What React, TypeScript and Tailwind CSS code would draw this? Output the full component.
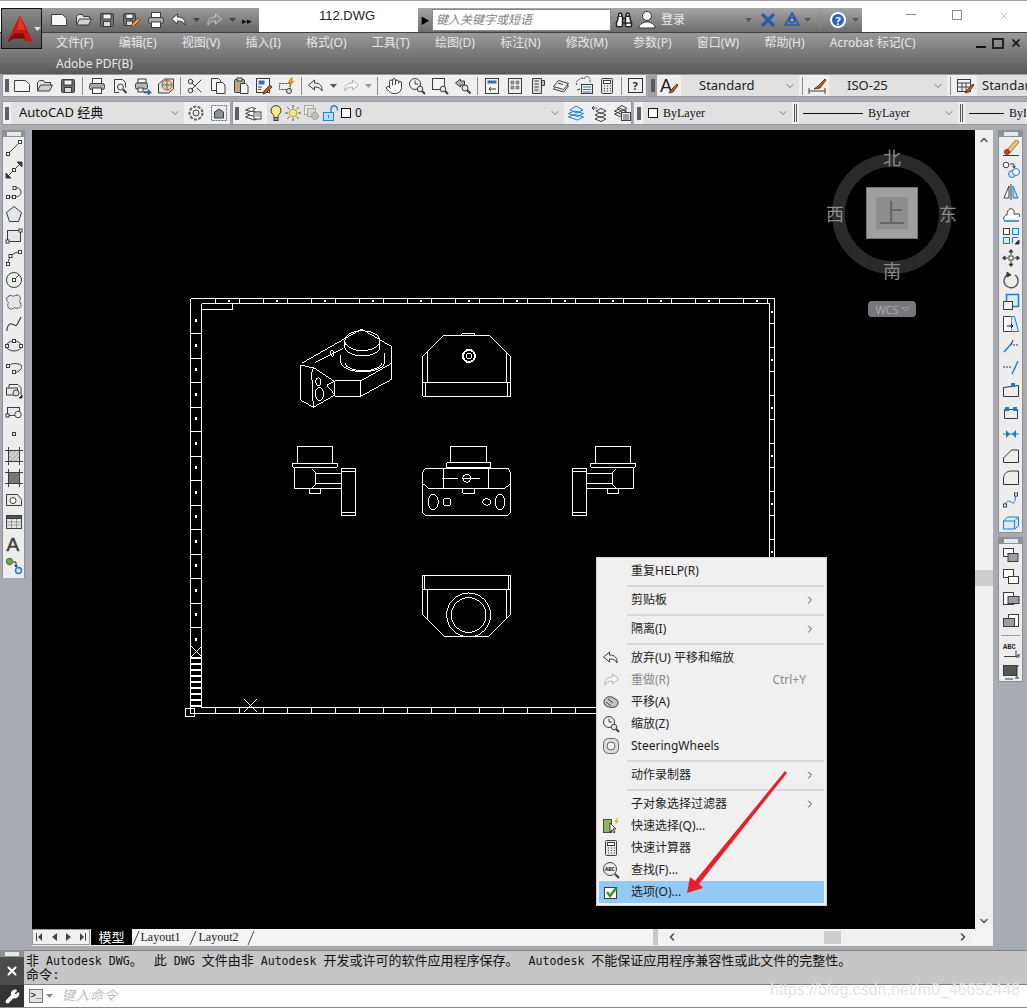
import type { ReactNode } from "react";
import { Binoculars, ChevronDown, ChevronLeft, ChevronRight, ChevronUp, Hand, Scissors, Wrench, X } from "lucide-react";

const BLUE = "#1b7bd0";

function Ico({ children, size = 18 }: { children: ReactNode; size?: number }) {
  return (
    <svg className="overflow-visible" width={size} height={size} viewBox="0 0 18 18" fill="none" stroke="#3c3c3c" strokeWidth="1">
      {children}
    </svg>
  );
}

const icons: Record<string, ReactNode> = {
  newFile: <path d="M1.5 3.5h11l4 4v7h-15z" fill="#f6f6f6" />,
  open: (
    <>
      <path d="M1.5 14V5.5l2-2h4l1 2h6v2.5" fill="#e2e2e2" />
      <path d="M1.5 14l3-6h12l-3 6z" fill="#cfcfcf" />
    </>
  ),
  save: (
    <>
      <rect x="2.5" y="2.5" width="13" height="13" rx="1" fill="#6a6f78" />
      <rect x="5" y="3" width="8" height="5" fill="#f2f2f2" />
      <rect x="5.5" y="10.5" width="7" height="5" fill="#dcdcdc" />
    </>
  ),
  saveAs: (
    <>
      <rect x="1.5" y="2.5" width="12" height="12" rx="1" fill="#6a6f78" />
      <rect x="4" y="3" width="7" height="4.5" fill="#f2f2f2" />
      <rect x="4.5" y="10" width="6" height="4.5" fill="#dcdcdc" />
      <path d="M9 16l1-3 6-6 2 2-6 6z" fill="#e8a33c" stroke="#7a4a10" />
    </>
  ),
  print: (
    <>
      <rect x="4.5" y="1.5" width="9" height="5" fill="#fff" />
      <rect x="1.5" y="6.5" width="15" height="6" rx="2" fill="#a9adb3" />
      <rect x="4.5" y="11" width="9" height="5.5" fill="#fff" />
    </>
  ),
  undo: <path d="M7.5 3L1.5 8l6 5v-3c4 0 6 1 7.5 4 .5-5-2-8-7.5-8z" fill="#eee" />,
  redo: <path d="M10.5 3l6 5-6 5v-3c-4 0-6 1-7.5 4-.5-5 2-8 7.5-8z" fill="#f7f7f7" stroke="#aeb0b3" />,
  redoDim: <path d="M10.5 3l6 5-6 5v-3c-4 0-6 1-7.5 4-.5-5 2-8 7.5-8z" fill="#8a8a8a" stroke="#c8c8c8" />,
  preview: (
    <>
      <path d="M3.5 2.5h8l3 3v5M8 15.5H3.5v-13" fill="#f8f8f8" />
      <circle cx="9.5" cy="10" r="3" fill="#e6eef5" />
      <path d="M12 12.5l3.5 3.5" strokeWidth="2" />
    </>
  ),
  publish: (
    <>
      <rect x="4" y="2" width="8" height="4" fill="#fff" />
      <rect x="1.5" y="6" width="12" height="6" rx="1.5" fill="#b5b8bd" />
      <rect x="4" y="11" width="5" height="4" fill="#fff" />
      <path d="M10 14.5h4v-2l3.5 3-3.5 2.5v-2h-4z" fill={BLUE} stroke="#0b4f91" strokeWidth="0.5" />
    </>
  ),
  dwf: (
    <>
      <path d="M1.5 7l6-5 9 0v10l-5 4h-10z" fill="#dfe3e6" />
      <circle cx="10" cy="8" r="5" fill="#f2d27a" stroke="#d4472d" />
      <path d="M10 3v10M5 8h10" stroke={BLUE} />
    </>
  ),
  copy: (
    <>
      <path d="M2.5 1.5h7l2 2v10h-9z" fill="#f4f4f4" />
      <path d="M7.5 5.5h6l2.5 2.5v8.5h-8.5z" fill="#f4f4f4" />
    </>
  ),
  paste: (
    <>
      <rect x="2.5" y="2.5" width="10" height="13" rx="1" fill="#b9a88a" />
      <rect x="5" y="1" width="5" height="3" fill="#d9d9d9" />
      <path d="M8.5 6.5h5l2.5 2.5v7.5h-7.5z" fill="#f4f4f4" />
    </>
  ),
  match: (
    <>
      <rect x="1.5" y="1.5" width="13" height="14" fill="#f4f4f4" />
      <rect x="3.5" y="3.5" width="6" height="4" fill="#2f6fb5" stroke="none" />
      <path d="M3 10h4M3 12.5h3" />
      <path d="M9 14l6-6 2 2-6 6-3 1z" fill="#b5651d" stroke="#6d3a0d" />
    </>
  ),
  blockEdit: (
    <>
      <path d="M1.5 6.5h11v6h-11z" fill="#eee" strokeDasharray="2 1" />
      <circle cx="11" cy="14" r="2.5" fill="#ddd" />
      <path d="M13 1l-3 5h3l-2 4 5-6h-3l2-3z" fill="#f0a01e" stroke="#b96c00" strokeWidth="0.5" />
    </>
  ),
  zoomRt: (
    <>
      <circle cx="7" cy="7" r="5.5" fill="#f2f2f2" />
      <path d="M7 3.5V7h3" />
      <circle cx="12" cy="12" r="2.8" fill="#dfe7ef" />
      <path d="M14 14l3 3" strokeWidth="2" />
    </>
  ),
  zoomWin: (
    <>
      <rect x="1.5" y="1.5" width="12" height="11" fill="#f4f4f4" />
      <circle cx="12" cy="12" r="2.8" fill="#dfe7ef" />
      <path d="M14 14l3 3" strokeWidth="2" />
    </>
  ),
  zoomPrev: (
    <>
      <path d="M6.5 2L1.5 6l5 4V8h4V4h-4z" fill="#aeb1b6" />
      <circle cx="11" cy="11" r="3" fill="#dfe7ef" />
      <path d="M13 13l3.5 3.5" strokeWidth="2" />
    </>
  ),
  props: (
    <>
      <rect x="2.5" y="1.5" width="13" height="15" fill="#f2f2f2" />
      <rect x="4.5" y="3.5" width="9" height="3" fill="#2f6fb5" stroke="none" />
      <path d="M13 12H6m2-2l-2 2 2 2" />
    </>
  ),
  grid: (
    <>
      <rect x="2.5" y="1.5" width="13" height="15" fill="#eee" />
      <path d="M5 4h3v3H5zm5 0h3v3h-3zM5 9h3v3H5zm5 0h3v3h-3z" fill="#9a9a9a" stroke="#555" strokeWidth="0.5" />
    </>
  ),
  palette: (
    <>
      <path d="M3.5 1.5h9v15h-9z" fill="#dcdcdc" />
      <path d="M12.5 3.5h3v5h-3z" fill="#bbb" />
      <path d="M5.5 4h4M5.5 7h4M5.5 10h4M5.5 13h4" strokeWidth="1.6" stroke="#777" />
    </>
  ),
  sheet: (
    <>
      <path d="M1.5 12l5-6 10 3-5 6z" fill="#ececec" />
      <path d="M1.5 9.5l5-6 10 3-5 6z" fill="#f6f6f6" />
      <path d="M6 6l5 1.5" />
    </>
  ),
  markup: (
    <>
      <path d="M2 8a3 3 0 0 1 2-5 3 3 0 0 1 5-1 3 3 0 0 1 6 1v3" strokeDasharray="2 1" />
      <rect x="6.5" y="7.5" width="11" height="9" fill="#eee" />
      <path d="M8 10h8M8 12.5h8M8 15h8" stroke="#1d86c6" />
      <path d="M2 13l3-1" />
    </>
  ),
  calc: (
    <>
      <rect x="3.5" y="1.5" width="11" height="15" rx="1" fill="#e6e6e6" />
      <rect x="5.5" y="3.5" width="7" height="3" fill="#fff" />
      <path d="M6 9h1m2 0h1m2 0h1M6 11.5h1m2 0h1m2 0h1M6 14h1m2 0h1m2 0h1" strokeWidth="1.2" />
    </>
  ),
  gear: (
    <>
      <circle cx="9" cy="9" r="6.5" strokeDasharray="3 1.5" strokeWidth="2" stroke="#666" />
      <circle cx="9" cy="9" r="3" />
    </>
  ),
  workspace: (
    <>
      <rect x="1.5" y="1.5" width="15" height="15" strokeDasharray="2 1" stroke="#5a6d7c" />
      <path d="M4.5 14V8l4.5-3 4.5 3v6z" fill="#8c8f94" />
    </>
  ),
  layers: (
    <>
      <path d="M1.5 13l6-2.5 9 2.5-6 3z" fill="#fff" />
      <path d="M1.5 9.5l6-2.5 9 2.5-6 3z" fill="#fff" />
      <path d="M1.5 6l6-2.5 4 1-4 3z" fill="#fff" />
      <rect x="10" y="8" width="7" height="7" fill="#fff" />
      <path d="M11 10h5M11 12h5" stroke="#777" />
    </>
  ),
  bulb: (
    <>
      <path d="M9 1.5a5 5 0 0 1 3 9c-1 1-1 2-1 3H7c0-1 0-2-1-3a5 5 0 0 1 3-9z" fill="#fbe785" />
      <rect x="7" y="13.5" width="4" height="3" fill="#8fa2b5" />
    </>
  ),
  sun: (
    <>
      <circle cx="9" cy="9" r="3.8" fill="#fbe785" stroke="#b79b3c" />
      <path d="M9 1v3M9 14v3M1 9h3M14 9h3M3.3 3.3l2 2M12.7 12.7l2 2M14.7 3.3l-2 2M5.3 12.7l-2 2" stroke="#555" />
    </>
  ),
  freeze: (
    <>
      <rect x="1.5" y="1.5" width="9" height="9" fill="#e7e7e7" stroke="#aaa" />
      <rect x="4.5" y="4.5" width="8" height="8" fill="#d4d4d4" stroke="#aaa" />
      <circle cx="12" cy="12" r="3.6" fill="#bbb" stroke="#999" strokeDasharray="2 1" />
    </>
  ),
  lock: (
    <>
      <path d="M9 8V5a3.2 3.2 0 0 1 6.4 0v1.5" stroke="#2e7fbf" strokeWidth="1.4" />
      <rect x="1.5" y="8.5" width="10" height="8" fill="#bcdcf2" stroke="#2e7fbf" />
      <path d="M6.5 11v3" stroke="#2e7fbf" />
    </>
  ),
  layerPrev: <path d="M1.5 13l6-2.5 9 2.5-6 3zM1.5 9.5l6-2.5 9 2.5-6 3zM3 6l6-4 7 4-6 3z" fill="#e3f1fb" stroke={BLUE} />,
  layerIso: (
    <>
      <path d="M2 4h5M4 2l-2 2 2 2" />
      <path d="M5 15l5-2.5 6 2.5-5 2.5zM5 11l5-2.5 6 2.5-5 2.5zM6 7l5-2.5 5 2.5-5 2.5z" fill="#f2f2f2" />
    </>
  ),
  layerStates: (
    <>
      <path d="M1.5 10l6-2.5 5 2-6 3zM1.5 7l6-2.5 6 2.5-6 3zM4 4.5l5-3 5 3-6 2.5z" fill="#f2f2f2" />
      <rect x="8.5" y="8.5" width="9" height="8" fill="#eee" />
      <path d="M10 11h6M10 13h6M10 15h6" stroke="#555" />
    </>
  ),
  textStyle: (
    <>
      <text x="0" y="15" fontSize="18" fontFamily="Liberation Sans" fill="#222" stroke="none">A</text>
      <path d="M9 16l2-3 6-6 1 1-5 7z" fill="#b5651d" stroke="#6d3a0d" />
    </>
  ),
  dimStyle: (
    <>
      <path d="M1 11v6M17 11v6M1 14h16" />
      <path d="M6 12l4-3 7-7 1 1-6 8z" fill="#b5651d" stroke="#6d3a0d" />
    </>
  ),
  tableStyle: (
    <>
      <rect x="1.5" y="2.5" width="13" height="12" fill="#f5f5f5" />
      <path d="M1.5 6h13M1.5 10h13M6 6v8M10 6v8" />
      <path d="M9 16l2-3 6-6 1 1-5 7z" fill="#b5651d" stroke="#6d3a0d" />
    </>
  ),
};

const leftTools: ReactNode[] = [
  <><path d="M3 15L15 3" /><rect x="1.5" y="13.5" width="3" height="3" fill="#fff" /><rect x="13.5" y="1.5" width="3" height="3" fill="#fff" /></>,
  <><path d="M2 16L16 2" /><path d="M1 17v-5l5 5zM17 1v5l-5-5z" fill="#333" /><rect x="7.5" y="7.5" width="3" height="3" fill="#fff" /></>,
  <><path d="M3 14h6c5 0 7-2 7-5s-3-5-6-4" /><rect x="1.5" y="12.5" width="3" height="3" fill="#fff" /><rect x="7.5" y="12.5" width="3" height="3" fill="#fff" /><rect x="8" y="3.5" width="3" height="3" fill="#fff" /></>,
  <path d="M9 1.5l7.5 6-3 9h-9l-3-9z" fill="#e4e6e9" />,
  <><rect x="2.5" y="3.5" width="13" height="11" fill="#e4e6e9" /><rect x="1" y="13" width="3" height="3" fill="#fff" /><rect x="14" y="2" width="3" height="3" fill="#fff" /></>,
  <><path d="M3 15c0-7 5-12 12-12" /><rect x="1.5" y="13.5" width="3" height="3" fill="#fff" /><rect x="13.5" y="1.5" width="3" height="3" fill="#fff" /><rect x="4" y="5.5" width="3" height="3" fill="#fff" /></>,
  <><circle cx="9" cy="9" r="7.5" fill="#eceeef" /><path d="M9 9l5-5" /><rect x="7.5" y="7.5" width="3" height="3" fill="#fff" /></>,
  <path d="M4 3c3-2 3 1 5 0s5-2 6 1-1 3 0 5 2 5-1 6-4-1-5 0-5 2-6-1 1-4 0-5-3-4 1-6z" fill="#e4e6e9" strokeDasharray="2 0.5" />,
  <path d="M2 16c0-5 2-8 5-7s4 3 6-1 3-6 3-6" strokeWidth="1.2" />,
  <><ellipse cx="9" cy="9" rx="7.5" ry="5" fill="#e4e6e9" /><rect x="7.5" y="2.5" width="3" height="3" fill="#fff" /><rect x="0.5" y="7.5" width="3" height="3" fill="#fff" /><rect x="14.5" y="7.5" width="3" height="3" fill="#fff" /></>,
  <><path d="M3 7c2-3 10-3 13-1 2 3-2 8-7 7" /><rect x="1.5" y="5.5" width="3" height="3" fill="#fff" /><rect x="7.5" y="11.5" width="3" height="3" fill="#fff" /></>,
  <><path d="M4 12V3.5h9l3 3V14" fill="#eee" /><rect x="1.5" y="7" width="11" height="7" fill="#e4e6e9" /><circle cx="11" cy="12" r="3" fill="#ddd" /><path d="M14 17l3-3v3z" fill="#111" /></>,
  <><rect x="2.5" y="4.5" width="12" height="8" fill="#e4e6e9" /><circle cx="13" cy="11.5" r="3.2" fill="#eee" /><rect x="1" y="11" width="3" height="3" fill="#fff" /></>,
  <rect x="7.5" y="7.5" width="3" height="3" />,
  <><rect x="3.5" y="3.5" width="11" height="11" fill="#bbb" /><path d="M4 9l5-5M4 13l9-9M8 14l6-6M12 14l2-2" stroke="#eee" /><path d="M0 3.5h18M0 14.5h18M3.5 0v18M14.5 0v18" /></>,
  <><rect x="3.5" y="3.5" width="11" height="11" fill="#777" /><path d="M0 3.5h18M0 14.5h18M3.5 0v18M14.5 0v18" /></>,
  <><path d="M1.5 3.5h11l4 5v6h-15z" fill="#e8e8e8" /><circle cx="8" cy="9.5" r="3" fill="#fff" /></>,
  <><rect x="1.5" y="2.5" width="15" height="13" fill="#e6e8ea" /><rect x="1.5" y="2.5" width="15" height="3" fill="#555" /><path d="M1.5 9h15M1.5 12h15M6.5 6v9M11.5 6v9" stroke="#999" /></>,
  <text x="1.5" y="16" fontSize="19" fontFamily="Liberation Sans" fill="#3c3c3c" stroke="#3c3c3c" strokeWidth="0.5">A</text>,
  <><circle cx="4.5" cy="4.5" r="3.2" fill="#6aa84f" stroke="#3b6d2a" /><path d="M8 5h3v4M9.5 8l1.5 2 1.5-2" stroke="#222" /><circle cx="13.5" cy="13.5" r="3" fill="#cfe6fa" stroke={BLUE} strokeWidth="1.4" /></>,
];

const rightTop: ReactNode[] = [
  <><path d="M4 12L14 1l3 2-9 11z" fill="#e8c080" stroke="#9a7a40" /><circle cx="5" cy="13" r="2.5" fill="#c9451b" stroke="#8a2d0c" /><path d="M1 16.5h16" /></>,
  <><circle cx="4" cy="4" r="2.8" fill="#fff" /><path d="M8 3h4v3M10.5 5l1.5 2 1.5-2" /><circle cx="10" cy="13" r="3.5" fill="#cfe6fa" stroke={BLUE} /><circle cx="14" cy="11" r="3.5" fill="#fff" stroke={BLUE} /></>,
  <><path d="M9 1v16" /><path d="M7 3L2 15h5z" fill="#fff" /><path d="M11 3l5 12h-5z" fill="#bcdcf2" stroke={BLUE} /></>,
  <><path d="M2 15c-1-3 1-5 3-5 0-4 2-7 5-6s2 4 2 5h4c2 0 2 2 1 3" fill="#fff" /><path d="M2 16h15" stroke={BLUE} strokeWidth="1.5" /></>,
  <><rect x="1.5" y="1.5" width="6" height="6" fill="#fff" /><rect x="10.5" y="1.5" width="6" height="6" fill="#d8ecfa" stroke={BLUE} /><rect x="1.5" y="10.5" width="6" height="6" fill="#d8ecfa" stroke={BLUE} /><path d="M10.5 16.5v-6h6" stroke={BLUE} /><path d="M13 17l4-4v4z" fill="#111" /></>,
  <><rect x="7" y="7" width="4" height="4" fill="#fff" /><path d="M9 6V1M7 3l2-2.5L11 3zM9 12v5M7 15l2 2.5 2-2.5zM6 9H1M3 7L.5 9 3 11zM12 9h5M15 7l2.5 2-2.5 2z" fill="#333" /></>,
  <><path d="M6 3.5A7 7 0 1 0 13 4" strokeWidth="1.4" stroke="#555" /><path d="M5 1l4 3-4 2z" fill="#333" /></>,
  <><rect x="4.5" y="1.5" width="12" height="12" fill="#d8ecfa" stroke={BLUE} strokeWidth="1.5" /><rect x="1.5" y="8.5" width="9" height="8" fill="#f0f0f0" /></>,
  <><path d="M1.5 1.5h8v15h-8z" fill="#fff" /><path d="M9.5 1.5h3l4 15h-7" fill="#d8ecfa" stroke={BLUE} /><path d="M5 11h6M9 9l2 2-2 2" stroke="#111" /></>,
  <><path d="M2 15L10 6" stroke={BLUE} strokeWidth="1.4" /><path d="M9 8l2-5M11 8h2M14 8h2" stroke="#333" /></>,
  <><path d="M1 8h2M4 8h2M7 8h2" stroke="#333" /><path d="M10 15l6-13" stroke={BLUE} strokeWidth="1.4" /></>,
  <><path d="M1.5 15.5v-9l15-2v11" stroke="#333" /><path d="M1.5 15.5h15" /><rect x="9" y="2" width="4" height="4" fill={BLUE} stroke="none" /></>,
  <><path d="M2.5 15.5v-9h13v9z" /><rect x="3" y="4" width="4" height="4" fill={BLUE} stroke="none" /><rect x="11" y="4" width="4" height="4" fill={BLUE} stroke="none" /></>,
  <><path d="M1 9h16" stroke={BLUE} /><path d="M4 5v8l4-4zM14 5v8l-4-4z" fill={BLUE} stroke="none" /></>,
  <path d="M1.5 15.5V11l8-8h7v12.5z" stroke="#333" />,
  <path d="M1.5 15.5V10c0-5 3-8 8-8h7v13.5z" stroke="#333" />,
  <><path d="M3 15c1-5 3-6 6-4s3 3 5-7" stroke={BLUE} /><rect x="1.5" y="13" width="3" height="3" fill="#fff" /><rect x="12.5" y="2" width="3" height="3" fill="#fff" /></>,
  <path d="M1.5 8l4-4h11v9l-4 3h-11zM1.5 8h11v8M12.5 8l4-4" stroke={BLUE} fill="#d8ecfa" />,
];

const rightBottom: ReactNode[] = [
  <><rect x="1.5" y="2.5" width="10" height="8" fill="#fff" /><rect x="6" y="7.5" width="10" height="8" fill="#9a9da2" /></>,
  <><rect x="1.5" y="1.5" width="10" height="8" fill="#fff" /><rect x="6.5" y="8.5" width="10" height="7" fill="#fff" /></>,
  <><rect x="1.5" y="2.5" width="10" height="12" fill="#fff" /><rect x="6" y="6.5" width="11" height="7" fill="#9a9da2" /></>,
  <><rect x="6.5" y="2.5" width="10" height="12" fill="#fff" /><rect x="1.5" y="6.5" width="11" height="8" fill="#9a9da2" /></>,
];

const rightLast: ReactNode[] = [
  <><text x="1" y="8" fontSize="7" fontWeight="700" fontFamily="Liberation Mono" fill="#222" stroke="none">ABC</text><path d="M2 15.5h12v-6M14 16l3-3v3z" /></>,
  <><rect x="1.5" y="2.5" width="13" height="10" fill="#555" /><path d="M3 16h8M15 2v13M13 3h4M13 15h4" /></>,
];

function Grip() {
  return <div className="h-[13px] w-[4px] bg-[radial-gradient(#555_0.7px,transparent_0.8px)] bg-[length:2px_2px]" />;
}

function HGrip() {
  return (
    <div className="flex h-[7px] items-center justify-center bg-[#8e9095]">
      <div className="h-[4px] w-[14px] bg-[radial-gradient(#eee_0.7px,transparent_0.8px)] bg-[length:2px_2px]" />
    </div>
  );
}

function Btn({ name, className = "w-[23px]" }: { name: string; className?: string }) {
  return (
    <div className={`flex h-full shrink-0 items-center justify-center ${className}`}>
      <Ico>{icons[name]}</Ico>
    </div>
  );
}

function Sep() {
  return (
    <div className="flex h-full w-[6px] shrink-0 items-center justify-center">
      <div className="h-[18px] w-px bg-[#8c8c8c]" />
    </div>
  );
}

function Drop({ color = "#555", className = "w-[12px]" }: { color?: string; className?: string }) {
  return (
    <div className={`flex h-full shrink-0 items-center justify-center ${className}`}>
      <svg width="7" height="4" viewBox="0 0 7 4">
        <path d="M0 0h7L3.5 4z" fill={color} />
      </svg>
    </div>
  );
}

function Combo({ className, children }: { className: string; children: ReactNode }) {
  return (
    <div className={`flex h-full shrink-0 items-center justify-between overflow-hidden bg-[#e1e1e1] pr-[3px] ${className}`}>
      {children}
    </div>
  );
}

function Chev() {
  return <ChevronDown className="h-[12px] w-[12px] shrink-0 text-[#555]" strokeWidth={1.5} />;
}

function TitleBar() {
  return (
    <div className="h-[32px] shrink-0 border-t border-[#a0a0a0] bg-white pt-[7px]">
      <div className="flex h-[24px] items-stretch text-[#222]">
        <div className="ml-[42px] flex w-[217px] shrink-0 items-center bg-gradient-to-b from-[#9c9c9c] to-[#676767] pl-[5px]">
          <Btn name="newFile" className="w-[24px]" />
          <Btn name="open" className="w-[25px]" />
          <Btn name="save" className="w-[22px]" />
          <Btn name="saveAs" className="w-[26px]" />
          <Btn name="print" className="w-[23px]" />
          <Btn name="undo" className="w-[23px]" />
          <Drop color="#444" />
          <Btn name="redoDim" className="w-[24px]" />
          <Drop color="#444" />
          <span className="ml-[4px] text-[9px] leading-none text-black">▸▸</span>
        </div>
        <div className="w-[159px] shrink-0 pl-[60px] font-['Liberation_Sans'] text-[13px] leading-[15px] text-[#222]">112.DWG</div>
        <div className="flex w-[444px] shrink-0 items-center bg-gradient-to-b from-[#a6a6a6] to-[#6e6e6e]">
          <div className="flex w-[14px] shrink-0 justify-center text-[9px] leading-none text-black">▶</div>
          <div className="flex h-[22px] w-[179px] shrink-0 items-center border border-[#888] bg-white pl-[3px] text-[12px] italic text-[#808080]">
            键入关键字或短语
          </div>
          <div className="flex h-full w-[26px] shrink-0 items-center justify-center">
            <Binoculars className="h-[18px] w-[18px] fill-white text-[#222]" />
          </div>
          <div className="flex h-full w-[20px] shrink-0 items-center justify-center">
            <svg width="18" height="20" viewBox="0 0 18 20" fill="#fff" stroke="#333">
              <circle cx="9" cy="6" r="4.5" />
              <path d="M1 18c0-4 4-5 6-6h4c2 1 6 2 6 6z" />
            </svg>
          </div>
          <span className="ml-[4px] w-[81px] shrink-0 text-[12px] leading-none text-[#ececec]">登录</span>
          <Drop />
          <div className="ml-[1px] flex w-[26px] shrink-0 justify-center">
            <X className="h-[20px] w-[20px] text-[#2a5aa8]" strokeWidth={4} />
          </div>
          <div className="flex w-[22px] shrink-0 justify-center">
            <svg width="18" height="18" viewBox="0 0 18 18" fill="none" stroke="#2257a8" strokeWidth="1.6">
              <path d="M9 2l7 12H2z" />
              <circle cx="9" cy="9" r="2.5" fill="#9ab" />
            </svg>
          </div>
          <Drop className="w-[8px]" />
          <div className="ml-[9px] h-[18px] w-px shrink-0 bg-[#8c8c8c]" />
          <div className="ml-[9px] flex h-[16px] w-[16px] shrink-0 items-center justify-center rounded-full border-2 border-white bg-[#2a62c0] text-[11px] font-bold leading-none text-white">
            ?
          </div>
          <Drop className="ml-[3px] w-[12px]" />
        </div>
        <div className="flex flex-1 justify-end pr-[17px] pt-[2px] text-[#666]">
          <div className="mr-[36px] mt-[4px] h-px w-[10px] bg-[#8a8a8a]" />
          <div className="mr-[36px] h-[10px] w-[10px] border border-[#8a8a8a]" />
          <X className="h-[12px] w-[12px] text-[#8a8a8a]" strokeWidth={1} />
        </div>
      </div>
    </div>
  );
}

function MenuBar() {
  const items = ["文件(F)", "编辑(E)", "视图(V)", "插入(I)", "格式(O)", "工具(T)", "绘图(D)", "标注(N)", "修改(M)", "参数(P)", "窗口(W)", "帮助(H)", "Acrobat 标记(C)"];
  return (
    <div className="h-[42px] shrink-0 border-t border-[#3f3f3f] bg-gradient-to-b from-[#9a9a9a] to-[#595959] pl-[56px] text-[12px] leading-[16px] text-[#e6e6e6]">
      <div className="flex h-[20px] items-center gap-[25.25px]">
        {items.map((m) => (
          <span key={m} className="shrink-0">{m}</span>
        ))}
        <div className="ml-auto mr-[5px] flex items-center gap-[6px]">
          <div className="mt-[8px] h-[2px] w-[10px] bg-[#111]" />
          <div className="h-[11px] w-[12px] border-2 border-[#222]" />
          <X className="h-[12px] w-[12px] text-[#111]" strokeWidth={3.5} />
        </div>
      </div>
      <div className="mt-[1px] flex h-[20px] items-center">Adobe PDF(B)</div>
    </div>
  );
}

function ToolbarOne() {
  return (
    <div className="flex h-[23px] shrink-0 pl-[2px]">
      <div className="flex w-[645px] items-center border border-[#9a9a9a] bg-[#efefef]">
        <div className="flex w-[7px] shrink-0 justify-center"><Grip /></div>
        <Btn name="newFile" />
        <Btn name="open" />
        <Btn name="save" />
        <Sep />
        <Btn name="print" />
        <Btn name="preview" />
        <Btn name="publish" />
        <Btn name="dwf" />
        <Sep />
        <div className="flex h-full w-[23px] shrink-0 items-center justify-center">
          <Scissors className="h-[18px] w-[18px] text-[#333]" strokeWidth={1.3} />
        </div>
        <Btn name="copy" />
        <Btn name="paste" />
        <Btn name="match" />
        <Btn name="blockEdit" />
        <Sep />
        <Btn name="undo" />
        <Drop />
        <Btn name="redo" />
        <Drop color="#999" />
        <div className="w-[8px] shrink-0"><Sep /></div>
        <div className="flex h-full w-[23px] shrink-0 items-center justify-center">
          <Hand className="h-[18px] w-[18px] fill-white text-[#333]" strokeWidth={1.3} />
        </div>
        <Btn name="zoomRt" />
        <Btn name="zoomWin" />
        <Btn name="zoomPrev" />
        <Sep />
        <Btn name="props" />
        <Btn name="grid" />
        <Btn name="palette" />
        <Btn name="sheet" />
        <Btn name="markup" />
        <Btn name="calc" />
        <Sep />
        <div className="flex w-[22px] shrink-0 justify-center">
          <div className="flex h-[15px] w-[15px] items-center justify-center border border-[#333] text-[11px] font-bold leading-none text-[#333]">?</div>
        </div>
      </div>
      <div className="ml-[1px] flex min-w-0 flex-1 items-center overflow-hidden border-y border-[#9a9a9a] bg-[#efefef] text-[13px] text-[#222]">
        <div className="flex h-full w-[9px] shrink-0 items-center justify-center bg-[#9fa1a6]"><Grip /></div>
        <Btn name="textStyle" />
        <Combo className="ml-px w-[118px] pl-[18px]">
          <span>Standard</span>
          <Chev />
        </Combo>
        <Sep />
        <Btn name="dimStyle" />
        <Combo className="ml-px w-[118px] pl-[18px]">
          <span>ISO-25</span>
          <Chev />
        </Combo>
        <Sep />
        <Btn name="tableStyle" />
        <Combo className="ml-px w-[60px] pl-[5px]">
          <span>Standard</span>
        </Combo>
      </div>
    </div>
  );
}

function ToolbarTwo() {
  return (
    <div className="mt-[4px] flex h-[24px] shrink-0 pl-[2px]">
      <div className="flex w-[229px] shrink-0 items-center border border-[#9a9a9a] bg-[#efefef]">
        <div className="flex w-[8px] shrink-0 justify-center"><Grip /></div>
        <Combo className="w-[173px] pl-[8px]">
          <span className="text-[13px] text-[#111]">AutoCAD 经典</span>
          <Chev />
        </Combo>
        <Btn name="gear" />
        <Btn name="workspace" />
      </div>
      <div className="ml-px flex w-[400px] shrink-0 items-center border border-[#9a9a9a] bg-[#efefef]">
        <div className="flex w-[7px] shrink-0 justify-center"><Grip /></div>
        <Btn name="layers" className="w-[26px]" />
        <Combo className="ml-[1px] w-[297px] pl-[1px]">
          <div className="flex items-center gap-[1px]">
            <Btn name="bulb" className="w-[15px]" />
            <Btn name="sun" className="w-[17px]" />
            <Btn name="freeze" className="w-[19px]" />
            <Btn name="lock" className="w-[17px]" />
            <div className="ml-[1px] h-[10px] w-[10px] border border-[#111] bg-white" />
            <span className="ml-[3px] text-[12px] text-[#111]">0</span>
          </div>
          <Chev />
        </Combo>
        <Btn name="layerPrev" />
        <Btn name="layerIso" />
        <Btn name="layerStates" />
      </div>
      <div className="ml-[2px] flex min-w-0 flex-1 items-center overflow-hidden border-y border-[#9a9a9a] bg-[#efefef] font-['Liberation_Serif'] text-[12px] text-[#111]">
        <div className="flex w-[9px] shrink-0 justify-center"><Grip /></div>
        <Combo className="w-[149px] pl-[5px]">
          <div className="flex items-center gap-[5px]">
            <div className="h-[10px] w-[10px] border border-[#111] bg-white" />
            <span>ByLayer</span>
          </div>
          <Chev />
        </Combo>
        <div className="mx-[2px] h-[18px] w-[3px] shrink-0 border-x border-[#555]" />
        <Combo className="w-[159px] pl-[4px]">
          <div className="flex items-center gap-[5px]">
            <div className="h-px w-[60px] bg-[#111]" />
            <span>ByLayer</span>
          </div>
          <Chev />
        </Combo>
        <div className="mx-[2px] h-[18px] w-[3px] shrink-0 border-x border-[#555]" />
        <Combo className="w-[61px] pl-[4px]">
          <div className="flex items-center gap-[5px]">
            <div className="h-px w-[35px] shrink-0 bg-[#111]" />
            <span>ByLayer</span>
          </div>
        </Combo>
      </div>
    </div>
  );
}

function Stack({ list }: { list: ReactNode[] }) {
  return (
    <>
      {list.map((ic, i) => (
        <div key={i} className="flex h-[22px] items-center justify-center">
          <Ico>{ic}</Ico>
        </div>
      ))}
    </>
  );
}

const range = (from: number, to: number, step: number) => {
  const out: number[] = [];
  for (let v = from; v < to; v += step) out.push(v);
  return out;
};

function PartIso() {
  return (
    <g transform="translate(280 320) scale(0.3333)" strokeWidth="3">
      <path d="M65 130L245 27 335 80V178L242 229H165" />
      <path d="M62 135V240L100 262 165 225V185L105 145 62 135" />
      <path d="M100 145L95 160 100 262" />
      <path d="M165 183H242L335 130M242 183V229M165 183L140 195 165 225" />
      <path d="M195 60V85A53 26 0 0 0 300 85V60" />
      <ellipse cx="247" cy="62" rx="53" ry="30" />
      <path d="M182 105V125A66 30 0 0 0 315 125V100M195 130A55 22 0 0 0 305 130" />
      <ellipse cx="115" cy="185" rx="8" ry="12" />
      <ellipse cx="118" cy="222" rx="12" ry="20" />
      <ellipse cx="157" cy="100" rx="5" ry="9" />
      <path d="M105 128L190 85" />
    </g>
  );
}

function PartBack() {
  return (
    <g transform="translate(280 320) scale(0.3333)" strokeWidth="3">
      <path d="M428 110L492 46H627L692 110V229H428Z" />
      <path d="M442 96V187M680 96V187M428 187H692M436 187V229M684 187V229M545 46V42H585V46" />
      <circle cx="567" cy="108" r="18" strokeWidth="6" />
      <circle cx="567" cy="108" r="8" />
    </g>
  );
}

function PartSide() {
  return (
    <g transform="translate(280 320) scale(0.3333)" strokeWidth="3">
      <path d="M52 430V379H158V430" />
      <path d="M38 430H172V442H38Z" />
      <path d="M43 442V506H184V446" />
      <path d="M95 446L108 460H184M108 460V490H184M108 490L95 506" />
      <path d="M88 506V520H122V506" />
      <path d="M184 445H227V586H184ZM184 455H227M184 577H227" />
    </g>
  );
}

function PartFront() {
  return (
    <g transform="translate(280 320) scale(0.3333)" strokeWidth="3">
      <path d="M511 428V379H620V428M500 428H632V443H500Z" />
      <path d="M436 445H684L692 458V578L684 586H436L428 578V458Z" />
      <path d="M492 445V505M626 445V505M428 490L445 505H675L692 490" />
      <path d="M487 475H535M545 475H600" />
      <circle cx="560" cy="475" r="12" />
      <path d="M548 505V520H584V505" />
      <ellipse cx="460" cy="546" rx="15" ry="23" />
      <ellipse cx="660" cy="546" rx="15" ry="23" />
      <rect x="490" y="535" width="22" height="21" rx="4" />
      <ellipse cx="620" cy="546" rx="12" ry="10" />
    </g>
  );
}

function PartBottom() {
  return (
    <g transform="translate(400 560) scale(0.3333)" strokeWidth="3">
      <path d="M68 46H331V88H68ZM75 46V88M325 46V88" />
      <path d="M68 88V165L132 229H266L331 165V88M82 88V178M320 88V178" />
      <circle cx="206" cy="165" r="66" />
      <circle cx="206" cy="165" r="52" />
    </g>
  );
}

function Drawing() {
  return (
    <svg className="h-full w-full" viewBox="32 130 943 799" fill="none" stroke="#fff" strokeWidth="1" shapeRendering="crispEdges">
      <path d="M190.5 298.5H774.5V560M201.5 303.5H769.5V560M190.5 298.5V713.5H600M201.5 303.5V707.5H600" />
      <path d="M201.5 309.5H232.5V303.5" />
      <rect x="185.5" y="708.5" width="9" height="8" />
      {range(215, 770, 24).map((x) => (
        <path key={x} d="M0 298.5V303.5" transform={`translate(${x} 0)`} />
      ))}
      {range(333, 650, 24.5).map((y) => (
        <path key={y} d="M190 0H201" transform={`translate(0 ${Math.round(y) + 0.5})`} />
      ))}
      {range(657, 706, 6).map((y) => (
        <path key={y} d="M190 0H201" transform={`translate(0 ${y + 0.5})`} strokeWidth="2" />
      ))}
      {range(319, 640, 24.5).map((y) => (
        <rect key={y} x="195" y={Math.round(y)} width="2" height="3" fill="#fff" stroke="none" />
      ))}
      {range(228, 770, 48).map((x) => (
        <rect key={x} x={x} y="300" width="2" height="2" fill="#fff" stroke="none" />
      ))}
      {range(323, 560, 24).map((y) => (
        <path key={y} d="M769 0H774" transform={`translate(0 ${y + 0.5})`} />
      ))}
      {range(311, 560, 48).map((y) => (
        <rect key={y} x="771" y={y} width="2" height="2" fill="#fff" stroke="none" />
      ))}
      {range(215, 597, 24).map((x) => (
        <path key={x} d="M0 707.5V713.5" transform={`translate(${x} 0)`} />
      ))}
      <path d="M191 646L202 657M202 646L191 657M244 699L257 712M257 699L244 712" />
      <PartIso />
      <PartBack />
      <PartSide />
      <g transform="translate(928 0) scale(-1 1)">
        <PartSide />
      </g>
      <PartFront />
      <PartBottom />
    </svg>
  );
}

function Compass() {
  return (
    <div className="absolute left-[798px] top-[15px] flex w-[124px] flex-col items-center text-[#8c8c8c]">
      <div className="relative h-[140px] w-[124px]">
        <div className="absolute left-[2px] top-[9px] h-[120px] w-[120px] rounded-full border-[13px] border-[#2a2a2a]" />
        <span className="absolute left-[53px] top-[2px] text-[18px] leading-[22px]">北</span>
        <span className="absolute left-[53px] top-[115px] text-[18px] leading-[22px]">南</span>
        <span className="absolute left-[-4px] top-[58px] text-[18px] leading-[22px]">西</span>
        <span className="absolute left-[109px] top-[58px] text-[18px] leading-[22px]">东</span>
        <div className="absolute left-[36px] top-[42px] flex h-[52px] w-[52px] items-center justify-center border border-[#777] bg-[#a0a0a0]">
          <div className="flex h-[32px] w-[32px] items-center justify-center bg-[#8e8e8e] text-[26px] leading-none text-[#666]">上</div>
        </div>
      </div>
      <div className="mt-[16px] flex h-[16px] w-[48px] items-center justify-center gap-[3px] rounded-[4px] bg-[#77787c] text-[11px] leading-none text-[#aaa]">
        WCS
        <svg width="7" height="4" viewBox="0 0 7 4" fill="none" stroke="#aaa"><path d="M0 0h7L3.5 4z" /></svg>
      </div>
    </div>
  );
}

function CanvasArea() {
  return (
    <div className="flex h-[799px] w-[961px]">
      <div className="relative h-full w-[943px] bg-black">
        <Drawing />
        <Compass />
      </div>
      <div className="flex w-[18px] flex-col items-center bg-[#f0f0f0] pb-[2px] pt-[4px]">
        <ChevronUp className="h-[12px] w-[12px] shrink-0 text-[#555]" strokeWidth={3} />
        <div className="mt-[424px] h-[16px] w-full shrink-0 bg-[#cdcdcd]" />
        <ChevronDown className="mt-auto h-[12px] w-[12px] shrink-0 text-[#555]" strokeWidth={3} />
      </div>
    </div>
  );
}

function TabSlash({ className }: { className: string }) {
  return (
    <svg width="8" height="15" viewBox="0 0 8 15" fill="none" stroke="#444" className={`shrink-0 ${className}`}>
      <path d="M1 15L7 1" />
    </svg>
  );
}

function TabStrip() {
  return (
    <div className="flex h-[17px] w-[961px] items-center border-b border-[#eee] bg-[#f4f4f4] font-['Liberation_Serif'] text-[12px] text-[#222]">
      <div className="flex h-full w-[58px] shrink-0 items-center gap-[1px] border border-[#999] bg-[#f0f0f0] text-[#444]">
        <svg width="12" height="12" viewBox="0 0 12 12" fill="#444"><path d="M3 2v8h1V2zM9 2v8L5 6z" /></svg>
        <svg width="14" height="12" viewBox="0 0 14 12" fill="#444" className="ml-[2px]"><path d="M9 2v8L4 6z" /></svg>
        <svg width="12" height="12" viewBox="0 0 12 12" fill="#444"><path d="M3 2v8l5-4z" /></svg>
        <svg width="12" height="12" viewBox="0 0 12 12" fill="#444" className="ml-[1px]"><path d="M8 2v8h1V2zM3 2v8l4-4z" /></svg>
      </div>
      <div className="ml-[1px] flex h-full w-[41px] shrink-0 items-center justify-center bg-black font-['Noto_Sans_CJK_SC'] text-[13px] text-white">模型</div>
      <TabSlash className="" />
      <div className="w-[41px] shrink-0 text-center leading-[15px]">Layout1</div>
      <TabSlash className="ml-[8px]" />
      <div className="ml-[1px] w-[41px] shrink-0 text-center leading-[15px]">Layout2</div>
      <TabSlash className="ml-[8px]" />
      <div className="ml-[398px] h-full w-[5px] shrink-0 bg-[#c8c8c8]" />
      <div className="ml-[5px] flex w-[308px] shrink-0 items-center bg-[#f0f0f0]">
        <ChevronLeft className="ml-[3px] h-[12px] w-[12px] shrink-0 text-[#444]" strokeWidth={3} />
        <div className="ml-[146px] h-[13px] w-[17px] shrink-0 bg-[#cdcdcd]" />
        <ChevronRight className="ml-auto mr-[2px] h-[12px] w-[12px] shrink-0 text-[#444]" strokeWidth={3} />
      </div>
    </div>
  );
}

function Latin({ children }: { children: ReactNode }) {
  return <span className="text-[11.6px]">{children}</span>;
}

function CommandBar() {
  return (
    <div className="mt-[4px] flex h-[58px] shrink-0 border-b border-[#888]">
      <div className="flex w-[24px] shrink-0 flex-col bg-[#4c4c4c] text-white">
        <HGrip />
        <div className="flex h-[28px] items-center justify-center">
          <X className="h-[14px] w-[14px]" strokeWidth={3.5} />
        </div>
        <div className="flex flex-1 items-center justify-center bg-[#333]">
          <Wrench className="h-[15px] w-[15px] fill-white" />
        </div>
      </div>
      <div className="flex min-w-0 flex-1 flex-col">
        <div className="h-[35px] border-y border-[#808080] bg-[#c6c6c6] pl-[2px] pt-[3px] font-['DejaVu_Sans_Mono','Noto_Sans_CJK_SC',monospace] text-[13px] leading-[14px] text-[#111]">
          <div className="whitespace-nowrap">
            非<Latin> Autodesk DWG</Latin>。<Latin> </Latin><span className="ml-[4px]">此</span><Latin> DWG </Latin>文件由非<Latin> Autodesk </Latin>开发或许可的软件应用程序保存。<Latin> </Latin><span className="ml-[3px] text-[11.6px]">Autodesk </span>不能保证应用程序兼容性或此文件的完整性。
          </div>
          <div>命令:</div>
        </div>
        <div className="flex flex-1 items-center bg-white pl-[5px]">
          <div className="flex h-[14px] w-[14px] items-center justify-center border border-[#777] bg-[#e4e4e4] font-['Liberation_Mono'] text-[9px] font-bold leading-none text-[#333]">
            &gt;_
          </div>
          <Drop color="#888" />
          <span className="ml-[7px] text-[13px] italic tracking-[1px] text-[#bdbdbd]">键入命令</span>
        </div>
      </div>
    </div>
  );
}

type MenuRow =
  | { sep: true }
  | { label: string; icon?: ReactNode; hint?: string; sub?: boolean; off?: boolean; on?: boolean };

const menu: MenuRow[] = [
  { label: "重复HELP(R)" },
  { sep: true },
  { label: "剪贴板", sub: true },
  { sep: true },
  { label: "隔离(I)", sub: true },
  { sep: true },
  { label: "放弃(U) 平移和缩放", icon: icons.undo },
  { label: "重做(R)", icon: icons.redo, hint: "Ctrl+Y", off: true },
  { label: "平移(A)", icon: <path d="M2 9c0-4 4-6 8-5l5 3c2 2 1 6-2 7-5 1-11 0-11-5zM6 6l5 4M4 9l5 4" fill="#c4c4c4" /> },
  { label: "缩放(Z)", icon: icons.zoomRt },
  { label: "SteeringWheels", icon: <><rect x="1.5" y="1.5" width="15" height="15" rx="5" fill="#ddd" stroke="#666" /><circle cx="9" cy="9" r="4" fill="#f4f4f4" stroke="#666" /></> },
  { sep: true },
  { label: "动作录制器", sub: true },
  { sep: true },
  { label: "子对象选择过滤器", sub: true },
  { label: "快速选择(Q)...", icon: <><rect x="1.5" y="2.5" width="8" height="13" fill="#8fb36a" stroke="#33591c" /><path d="M8 6v9l2-2 2 3 1-1-2-3h3z" fill="#fff" /><path d="M15 1l-3 4h2l-1 3 4-4h-2l1-3z" fill="#f3b02a" stroke="none" /></> },
  { label: "快速计算器", icon: icons.calc },
  { label: "查找(F)...", icon: <><circle cx="8" cy="8" r="6.5" fill="#eee" /><text x="3" y="10" fontSize="5.5" fontWeight="700" fontFamily="Liberation Mono" fill="#111" stroke="none">ABC</text><path d="M13 13l4 4" strokeWidth="2" /></> },
  { label: "选项(O)...", on: true, icon: <><rect x="2.5" y="4.5" width="12" height="11" fill="#fff" /><path d="M5 9l3 4 7-9" stroke="#2c9a2c" strokeWidth="2.5" /></> },
];

function ContextMenu() {
  return (
    <div className="absolute left-[596px] top-[557px] flex w-[231px] flex-col border border-[#d0d0d0] bg-[#f0f0f0] p-[2px] text-[12px] leading-[16px] text-[#1c1c1c]">
      {menu.map((row, i) =>
        "sep" in row ? (
          <div key={i} className="flex h-[7px] items-center pl-[28px]">
            <div className="h-[2px] w-full bg-[#d9d9d9]" />
          </div>
        ) : (
          <div key={i} className={`flex h-[22px] items-center ${row.on ? "bg-[#91c9f7]" : ""}`}>
            <div className="flex w-[24px] shrink-0 justify-center">{row.icon && <Ico>{row.icon}</Ico>}</div>
            <span className={`ml-[8px] ${row.off ? "text-[#8a8a8a]" : ""}`}>{row.label}</span>
            {row.hint && <span className="ml-auto mr-[18px] text-[#8a8a8a]">{row.hint}</span>}
            {row.sub && <ChevronRight className="ml-auto mr-[8px] h-[12px] w-[12px] text-[#444]" strokeWidth={2} />}
          </div>
        )
      )}
    </div>
  );
}

export default function App() {
  return (
    <div className="relative flex h-[1008px] w-[1027px] flex-col overflow-hidden bg-[#a9abb2] font-['Noto_Sans','Noto_Sans_CJK_SC',sans-serif]">
      <TitleBar />
      <MenuBar />
      <ToolbarOne />
      <ToolbarTwo />
      <div className="mt-[5px] flex h-[816px] shrink-0">
        <div className="ml-[2px] mr-[7px] h-[448px] w-[23px] shrink-0 border-x border-[#8e9095] bg-[#ededed]">
          <HGrip />
          <Stack list={leftTools} />
        </div>
        <div className="w-[961px] shrink-0">
          <CanvasArea />
          <TabStrip />
        </div>
        <div className="ml-[5px] flex w-[25px] shrink-0 flex-col gap-[4px]">
          <div className="h-[403px] border-x border-b border-[#8e9095] bg-[#ededed]">
            <HGrip />
            <Stack list={rightTop} />
          </div>
          <div className="h-[145px] border-x border-b border-[#8e9095] bg-[#ededed]">
            <HGrip />
            <Stack list={rightBottom} />
            <div className="mx-[2px] mb-[3px] mt-[3px] h-px bg-[#999]" />
            <Stack list={rightLast} />
          </div>
        </div>
      </div>
      <CommandBar />

      {/* logo */}
      <div className="absolute left-[1px] top-[8px] flex h-[41px] w-[41px] items-center border border-[#111] bg-gradient-to-b from-[#8a8a8a] to-[#555] pl-[4px]">
        <svg width="28" height="30" viewBox="0 0 26 28">
          <path d="M13 1L1 26l6-3 6-5 5 8h7z" fill="#c4190f" />
          <path d="M1 26l6-3h11l-2-5H8z" fill="#7c0d08" />
          <path d="M13 1l5 14h-8z" fill="#e2352a" />
        </svg>
        <svg width="7" height="4" viewBox="0 0 7 4"><path d="M0 0h7L3.5 4z" fill="#ddd" /></svg>
      </div>

      <ContextMenu />

      {/* red arrow pasted over the screenshot */}
      <svg className="pointer-events-none absolute left-0 top-0" width="1027" height="1008" viewBox="0 0 1027 1008">
        <path d="M687 893L690 877 695 881 785 771 787 773 699 884 703 888Z" fill="#e8202a" />
      </svg>

      <span className="absolute left-[770px] top-[981px] whitespace-nowrap font-['Liberation_Sans'] text-[16px] leading-[18px] text-[#e4e4e4]">
        https://blog.csdn.net/m0_46652448
      </span>
    </div>
  );
}
